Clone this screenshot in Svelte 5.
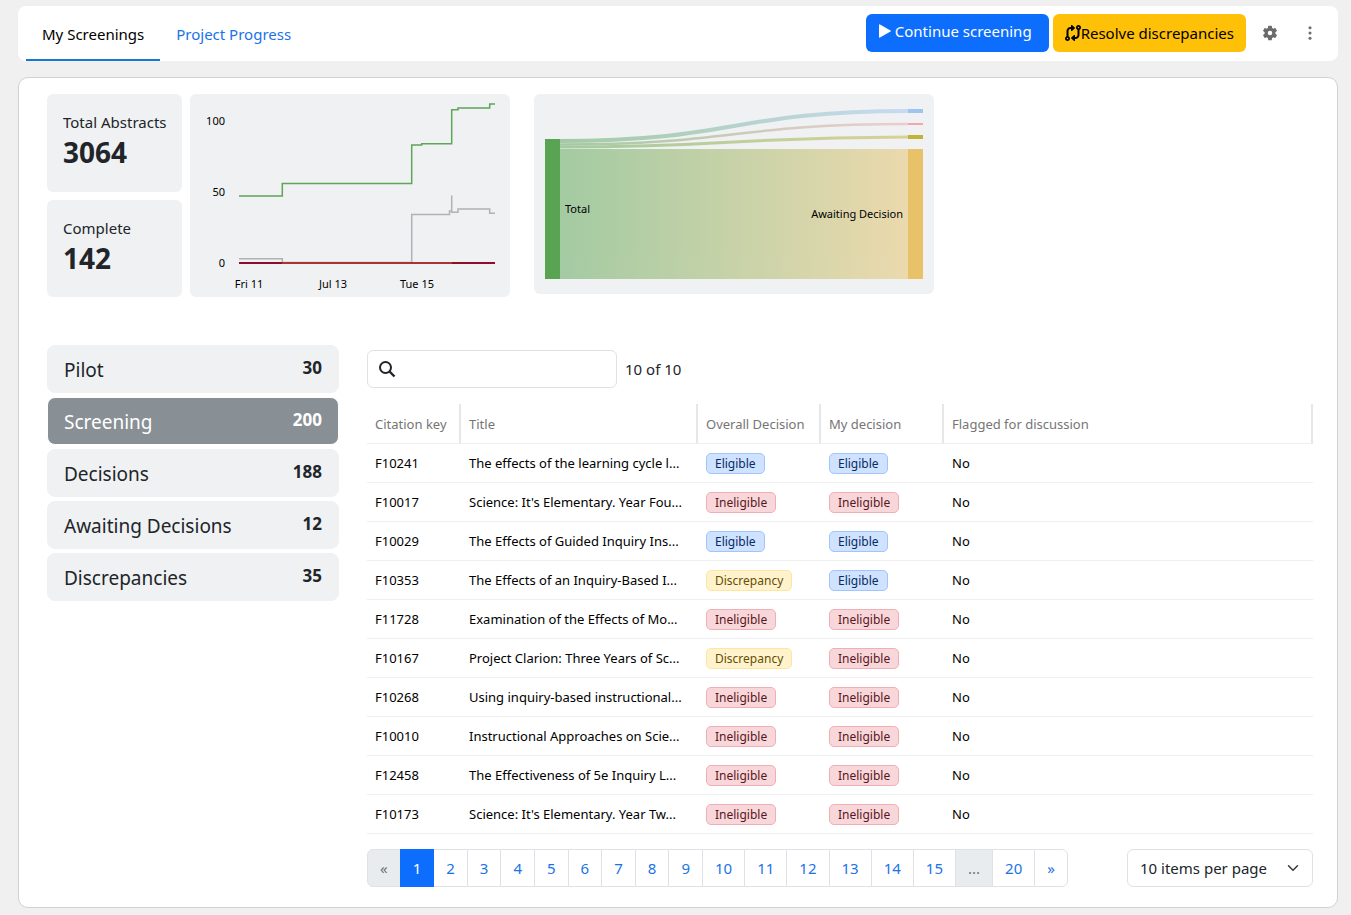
<script lang="ts">
    type Decision = 'Eligible' | 'Ineligible' | 'Discrepancy';

    interface Citation {
        key: string;
        title: string;
        overall: Decision;
        mine: Decision;
        flagged: boolean;
    }

    const stages = [
        { name: 'Pilot', count: 30 },
        { name: 'Screening', count: 200 },
        { name: 'Decisions', count: 188 },
        { name: 'Awaiting Decisions', count: 12 },
        { name: 'Discrepancies', count: 35 }
    ];

    const citations: Citation[] = [
        { key: 'F10241', title: 'The effects of the learning cycle l...', overall: 'Eligible', mine: 'Eligible', flagged: false },
        { key: 'F10017', title: "Science: It's Elementary. Year Fou...", overall: 'Ineligible', mine: 'Ineligible', flagged: false },
        { key: 'F10029', title: 'The Effects of Guided Inquiry Ins...', overall: 'Eligible', mine: 'Eligible', flagged: false },
        { key: 'F10353', title: 'The Effects of an Inquiry-Based I...', overall: 'Discrepancy', mine: 'Eligible', flagged: false },
        { key: 'F11728', title: 'Examination of the Effects of Mo...', overall: 'Ineligible', mine: 'Ineligible', flagged: false },
        { key: 'F10167', title: 'Project Clarion: Three Years of Sc...', overall: 'Discrepancy', mine: 'Ineligible', flagged: false },
        { key: 'F10268', title: 'Using inquiry-based instructional...', overall: 'Ineligible', mine: 'Ineligible', flagged: false },
        { key: 'F10010', title: 'Instructional Approaches on Scie...', overall: 'Ineligible', mine: 'Ineligible', flagged: false },
        { key: 'F12458', title: 'The Effectiveness of 5e Inquiry L...', overall: 'Ineligible', mine: 'Ineligible', flagged: false },
        { key: 'F10173', title: "Science: It's Elementary. Year Tw...", overall: 'Ineligible', mine: 'Ineligible', flagged: false }
    ];

    const lastPage = 20;
    const pages = Array.from({ length: 15 }, (_, i) => i + 1);
    const pageSizes = [10, 25, 50];

    let activeTab = $state('My Screenings');
    let activeStage = $state('Screening');
    let search = $state('');
    let currentPage = $state(1);
    let pageSize = $state(10);

    const visible = $derived(
        citations.filter(c => `${c.key} ${c.title}`.toLowerCase().includes(search.toLowerCase()))
    );

    function goToPage(page: number) {
        if (page >= 1 && page <= lastPage) {
            currentPage = page;
        }
    }
</script>

<div class="page">
    <header class="toolbar">
        <nav class="tabs">
            {#each ['My Screenings', 'Project Progress'] as tab}
                <button type="button" class="tab" class:active={activeTab === tab} onclick={() => (activeTab = tab)}>
                    {tab}
                </button>
            {/each}
        </nav>
        <div class="actions">
            <button type="button" class="btn primary">
                <svg width="13" height="14" viewBox="0 0 13 14" aria-hidden="true">
                    <path d="M1 1v12q0 1 1 .6l10.500-6q.8-.6 0-1.200L2 .4Q1 0 1 1z" fill="currentColor" />
                </svg>
                Continue screening
            </button>
            <button type="button" class="btn warning">
                <svg width="16" height="16" viewBox="0 0 512 512" aria-hidden="true">
                    <path
                        fill="currentColor"
                        d="M320 488c0 9.500-5.600 18.100-14.200 21.900s-18.800 2.300-25.800-4.100l-80-72c-5.100-4.600-7.900-11-7.900-17.800s2.900-13.300 7.900-17.800l80-72c7-6.300 17.200-7.900 25.800-4.100S320 334.500 320 344v40h16c35.300 0 64-28.700 64-64V153.300C371.700 141 352 112.800 352 80c0-44.200 35.800-80 80-80s80 35.800 80 80c0 32.800-19.700 61-48 73.300V320c0 70.700-57.300 128-128 128h-16v40zM456 80a24 24 0 1 0-48 0 24 24 0 1 0 48 0zM192 24c0-9.500 5.600-18.100 14.200-21.900S225-.2 232 6.200l80 72c5.100 4.600 7.900 11 7.900 17.800s-2.900 13.300-7.900 17.800l-80 72c-7 6.300-17.200 7.900-25.800 4.100S192 177.500 192 168v-40h-16c-35.300 0-64 28.700-64 64v166.700c28.300 12.300 48 40.500 48 73.300 0 44.200-35.800 80-80 80S0 476.200 0 432c0-32.800 19.700-61 48-73.300V192c0-70.700 57.300-128 128-128h16V24zM56 432a24 24 0 1 0 48 0 24 24 0 1 0-48 0z"
                    />
                </svg>Resolve discrepancies
            </button>
            <div class="icons">
                <button type="button" class="icon-btn" aria-label="Settings">
                    <svg width="18" height="18" viewBox="0 0 24 24" aria-hidden="true">
                        <path
                            fill="currentColor"
                            d="M19.140 12.940c.04-.3.06-.61.06-.94 0-.32-.02-.64-.07-.94l2.030-1.580a.49.49 0 0 0 .12-.61l-1.920-3.320a.488.488 0 0 0-.59-.22l-2.390.96c-.5-.38-1.030-.7-1.620-.94l-.36-2.540a.484.484 0 0 0-.48-.41h-3.840c-.24 0-.43.17-.47.41l-.36 2.540c-.59.24-1.130.57-1.620.94l-2.390-.96c-.22-.08-.47 0-.59.22L2.740 8.870c-.12.21-.08.47.12.61l2.030 1.580c-.05.3-.09.63-.09.94s.02.64.07.94l-2.030 1.580a.49.49 0 0 0-.12.61l1.920 3.320c.12.22.37.29.59.22l2.390-.96c.5.38 1.030.7 1.620.94l.36 2.540c.05.24.24.41.48.41h3.840c.24 0 .44-.17.47-.41l.36-2.540c.59-.24 1.130-.56 1.620-.94l2.390.96c.22.08.47 0 .59-.22l1.920-3.320c.12-.22.07-.47-.12-.61l-2.010-1.580zM12 15a3 3 0 1 1 0-6 3 3 0 0 1 0 6z"
                        />
                    </svg>
                </button>
                <button type="button" class="icon-btn" aria-label="More options">
                    <svg width="18" height="18" viewBox="0 0 24 24" fill="currentColor" aria-hidden="true">
                        <circle cx="12" cy="5" r="2" />
                        <circle cx="12" cy="12" r="2" />
                        <circle cx="12" cy="19" r="2" />
                    </svg>
                </button>
            </div>
        </div>
    </header>

    <main class="card">
        <section class="overview">
            <div class="stats">
                <div class="stat">
                    <span>Total Abstracts</span>
                    <strong>3064</strong>
                </div>
                <div class="stat">
                    <span>Complete</span>
                    <strong>142</strong>
                </div>
            </div>

            <svg class="chart" width="320" height="203" viewBox="0 0 320 203" role="img" aria-label="Screening over time">
                <g text-anchor="end">
                    <text x="35" y="31">100</text>
                    <text x="35" y="102">50</text>
                    <text x="35" y="173">0</text>
                </g>
                <g text-anchor="middle">
                    <text x="59" y="194">Fri 11</text>
                    <text x="143" y="194">Jul 13</text>
                    <text x="227" y="194">Tue 15</text>
                </g>
                <g fill="none" stroke-width="1.5">
                    <path
                        stroke="#b0b2b3"
                        d="M49 164.700H92.300V168.500H221.700V120.500H259.500V117H261.700V101.500V118.200H268V115H299.700V119.200H305"
                    />
                    <path
                        stroke="#5fa55a"
                        d="M49 102H92.300V89.500H221.700V51H231.700V49.700H261.700V15.700H268V14H299.700V10H305"
                    />
                    <path stroke="#8f0d28" stroke-width="2" d="M49 169H92M262 169H305" />
                    <path stroke="#a83236" stroke-width="2" d="M92 169H262" />
                </g>
            </svg>

            <svg class="chart sankey" width="400" height="200" viewBox="0 0 400 200" role="img" aria-label="Decision flow">
                <defs>
                    <linearGradient id="to-blue" gradientUnits="userSpaceOnUse" x1="26" x2="374">
                        <stop offset="0" stop-color="#59a453" />
                        <stop offset="1" stop-color="#a0c4f2" />
                    </linearGradient>
                    <linearGradient id="to-pink" gradientUnits="userSpaceOnUse" x1="26" x2="374">
                        <stop offset="0" stop-color="#59a453" />
                        <stop offset="1" stop-color="#f0a8ac" />
                    </linearGradient>
                    <linearGradient id="to-olive" gradientUnits="userSpaceOnUse" x1="26" x2="374">
                        <stop offset="0" stop-color="#59a453" />
                        <stop offset="1" stop-color="#c2b238" />
                    </linearGradient>
                    <linearGradient id="to-gold" gradientUnits="userSpaceOnUse" x1="26" x2="374">
                        <stop offset="0" stop-color="#59a453" />
                        <stop offset="1" stop-color="#e7c268" />
                    </linearGradient>
                </defs>
                <g fill="none" opacity="0.5">
                    <path d="M26 47C200 47 200 17 374 17" stroke="url(#to-blue)" stroke-width="4" />
                    <path d="M26 50.500C200 50.500 200 30 374 30" stroke="url(#to-pink)" stroke-width="2.5" />
                    <path d="M26 53C200 53 200 43 374 43" stroke="url(#to-olive)" stroke-width="3" />
                    <path d="M26 55H374V185H26z" fill="url(#to-gold)" />
                </g>
                <rect x="11" y="45" width="15" height="140" fill="#59a453" />
                <rect x="374" y="15" width="15" height="4" fill="#a0c4f2" />
                <rect x="374" y="29" width="15" height="2" fill="#f0a8ac" />
                <rect x="374" y="41" width="15" height="4" fill="#c2b238" />
                <rect x="374" y="55" width="15" height="130" fill="#e7c268" />
                <text x="31" y="119">Total</text>
                <text x="369" y="124" text-anchor="end">Awaiting Decision</text>
            </svg>
        </section>

        <section class="content">
            <div class="stages">
                {#each stages as stage}
                    <button
                        type="button"
                        class="stage"
                        class:active={activeStage === stage.name}
                        onclick={() => (activeStage = stage.name)}
                    >
                        <span>{stage.name}</span>
                        <strong>{stage.count}</strong>
                    </button>
                {/each}
            </div>

            <div class="results">
                <div class="search-row">
                    <label class="search">
                        <svg width="18" height="18" viewBox="0 0 18 18" fill="none" stroke="currentColor" aria-hidden="true">
                            <circle cx="7.5" cy="7.5" r="5.5" stroke-width="2" />
                            <path d="M11.500 11.500L16.500 16.500" stroke-width="2.4" />
                        </svg>
                        <input type="text" aria-label="Search citations" bind:value={search} />
                    </label>
                    <span>{visible.length} of {citations.length}</span>
                </div>

                <table>
                    <colgroup>
                        <col class="col-key" />
                        <col class="col-title" />
                        <col class="col-decision" />
                        <col class="col-decision" />
                        <col />
                    </colgroup>
                    <thead>
                        <tr>
                            <th>Citation key</th>
                            <th>Title</th>
                            <th>Overall Decision</th>
                            <th>My decision</th>
                            <th>Flagged for discussion</th>
                        </tr>
                    </thead>
                    <tbody>
                        {#each visible as citation (citation.key)}
                            <tr>
                                <td>{citation.key}</td>
                                <td>{citation.title}</td>
                                <td><span class="badge {citation.overall.toLowerCase()}">{citation.overall}</span></td>
                                <td><span class="badge {citation.mine.toLowerCase()}">{citation.mine}</span></td>
                                <td>{citation.flagged ? 'Yes' : 'No'}</td>
                            </tr>
                        {/each}
                    </tbody>
                </table>

                <div class="footer">
                    <nav class="pagination" aria-label="Pages">
                        <button type="button" disabled={currentPage === 1} aria-label="Previous" onclick={() => goToPage(currentPage - 1)}>«</button>
                        {#each pages as page}
                            <button type="button" class:active={currentPage === page} onclick={() => goToPage(page)}>{page}</button>
                        {/each}
                        <button type="button" disabled>...</button>
                        <button type="button" onclick={() => goToPage(lastPage)}>{lastPage}</button>
                        <button type="button" aria-label="Next" onclick={() => goToPage(currentPage + 1)}>»</button>
                    </nav>
                    <div class="page-size">
                        <select aria-label="Items per page" bind:value={pageSize}>
                            {#each pageSizes as size}
                                <option value={size}>{size} items per page</option>
                            {/each}
                        </select>
                        <svg width="12" height="12" viewBox="0 0 16 16" fill="none" aria-hidden="true">
                            <path d="M2 5l6 6 6-6" stroke="#343a40" stroke-width="2" stroke-linecap="round" stroke-linejoin="round" />
                        </svg>
                    </div>
                </div>
            </div>
        </section>
    </main>
</div>

<style>
    :global(body) {
        background: #f0f0f0;
    }

    .page {
        padding: 6px 13px 7px 18px;
        font-family: 'Noto Sans', 'Open Sans', sans-serif;
        font-size: 15px;
        line-height: 24px;
        color: #212529;
    }

    button,
    input,
    select {
        font: inherit;
        color: inherit;
    }

    button {
        cursor: pointer;
    }

    .toolbar {
        display: flex;
        justify-content: space-between;
        height: 55px;
        background: #fff;
        border-radius: 8px;
    }

    .tabs,
    .actions,
    .icons {
        display: flex;
    }

    .tabs {
        padding-left: 8px;
    }

    .tab {
        padding: 2px 16px 0;
        border: none;
        border-bottom: 2px solid transparent;
        background: none;
        color: #1a73e8;
    }

    .tab.active {
        color: #000;
        border-bottom-color: #1976d2;
    }

    .actions {
        align-items: center;
        gap: 4px;
        padding: 0 8px 2px 0;
    }

    .btn {
        display: flex;
        align-items: center;
        height: 38px;
        padding: 0 12px;
        border: none;
        border-radius: 6px;
    }

    .btn.primary {
        gap: 4px;
        padding: 0 17px 3px 12px;
        background: #0d6efd;
        color: #fff;
    }

    .btn.warning {
        background: #ffc107;
        color: #000;
    }

    .icon-btn {
        display: grid;
        place-items: center;
        width: 40px;
        height: 40px;
        padding: 0;
        border: none;
        background: none;
        color: #6b6b6b;
    }

    .card {
        margin-top: 16px;
        padding: 16px 24px 20px 28px;
        background: #fff;
        border: 1px solid #d0d1d2;
        border-radius: 10px;
    }

    .overview {
        display: flex;
        align-items: flex-start;
        gap: 8px;
    }

    .stats {
        display: flex;
        flex-direction: column;
        gap: 8px;
        width: 135px;
        height: 203px;
    }

    .stat {
        flex: 1;
        padding: 16px;
        box-sizing: border-box;
        background: #eff1f3;
        border-radius: 6px;
        white-space: nowrap;
    }

    .stat span,
    .stat strong {
        display: block;
    }

    .stat strong {
        font-size: 28px;
        line-height: 36px;
    }

    .chart {
        background: #eff1f3;
        border-radius: 6px;
        font-size: 11px;
    }

    .sankey {
        margin-left: 16px;
    }

    .content {
        display: flex;
        gap: 28px;
        margin-top: 48px;
    }

    .stages {
        display: flex;
        flex-direction: column;
        gap: 4px;
        width: 292px;
    }

    .stage {
        display: flex;
        justify-content: space-between;
        height: 48px;
        padding: 12px 16px 8px;
        border: 1px solid #eff1f3;
        border-radius: 8px;
        background: #eff1f3;
        font-size: 19px;
    }

    .stage strong {
        font-size: 17px;
        line-height: 20px;
    }

    .stage.active {
        border-color: #fff;
        background: #899095;
        color: #fff;
    }

    .results {
        flex: 1;
        min-width: 0;
        padding-top: 5px;
    }

    .search-row {
        display: flex;
        align-items: center;
        gap: 8px;
    }

    .search {
        display: flex;
        align-items: center;
        gap: 8px;
        width: 250px;
        height: 38px;
        padding: 0 10px;
        box-sizing: border-box;
        border: 1px solid #dee2e6;
        border-radius: 6px;
    }

    .search input {
        flex: 1;
        min-width: 0;
        border: none;
        outline: none;
        background: none;
    }

    table {
        width: 100%;
        margin-top: 16px;
        table-layout: fixed;
        border-collapse: separate;
        border-spacing: 0;
        font-size: 13px;
        line-height: 20px;
        color: #000;
    }

    .col-key {
        width: 94px;
    }

    .col-title {
        width: 237px;
    }

    .col-decision {
        width: 123px;
    }

    th,
    td {
        height: 38px;
        padding: 0 0 0 8px;
        border-bottom: 1px solid #eeefef;
        text-align: left;
        white-space: nowrap;
    }

    th {
        height: 39px;
        border-right: 2px solid #e6e7e7;
        font-weight: 400;
        color: #757575;
    }

    .badge {
        display: inline-block;
        padding: 0 8px;
        border: 1px solid;
        border-radius: 5px;
        font-size: 12px;
        line-height: 19px;
        vertical-align: middle;
    }

    .eligible {
        background: #cfe2ff;
        border-color: #9ec5fe;
        color: #052c65;
    }

    .ineligible {
        background: #f8d7da;
        border-color: #f1aeb5;
        color: #58151c;
    }

    .discrepancy {
        background: #fff3cd;
        border-color: #ffe69c;
        color: #664d03;
    }

    .footer {
        display: flex;
        justify-content: space-between;
        margin-top: 15px;
    }

    .pagination {
        display: flex;
    }

    .pagination button {
        height: 38px;
        padding: 0 12px;
        margin-left: -1px;
        border: 1px solid #dee2e6;
        background: #fff;
        color: #1a73e8;
    }

    .pagination button:first-child {
        margin-left: 0;
        border-radius: 6px 0 0 6px;
    }

    .pagination button:last-child {
        border-radius: 0 6px 6px 0;
    }

    .pagination button:disabled {
        background: #e9ecef;
        color: #6c757d;
        cursor: default;
    }

    .pagination button.active {
        z-index: 1;
        background: #0d6efd;
        border-color: #0d6efd;
        color: #fff;
    }

    .page-size {
        position: relative;
        width: 186px;
    }

    .page-size select {
        width: 100%;
        height: 38px;
        padding: 0 36px 0 12px;
        appearance: none;
        border: 1px solid #dee2e6;
        border-radius: 6px;
        background: #fff;
    }

    .page-size svg {
        position: absolute;
        top: 13px;
        right: 14px;
        pointer-events: none;
    }
</style>
